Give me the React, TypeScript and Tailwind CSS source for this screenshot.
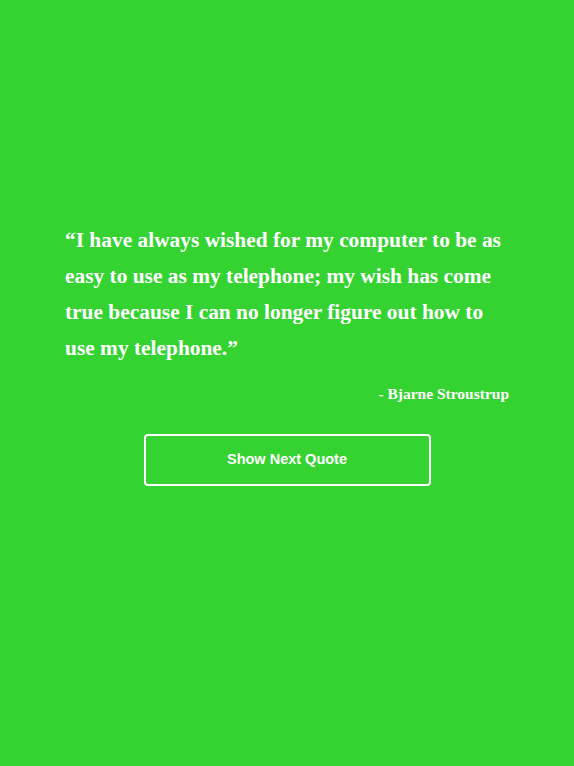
export default function App() {
  return (
    <div className="min-h-[766px] w-full bg-[#35d332] flex flex-col items-center pt-[222px]">
      <div className="w-[444px] text-white font-['Liberation_Serif',serif]">
        <p className="text-[21.4px] leading-[36px] font-bold">
          “I have always wished for my computer to be as easy to use as my telephone; my wish has come true because I can no longer figure out how to use my telephone.”
        </p>
        <p className="mt-[16px] text-right text-[15.5px] font-bold">
          - Bjarne Stroustrup
        </p>
      </div>
      <button className="mt-[29px] w-[287px] h-[52px] border-2 border-white rounded-[4px] text-white text-[14.5px] font-bold font-['Liberation_Sans',Arial,sans-serif]">
        Show Next Quote
      </button>
    </div>
  );
}
